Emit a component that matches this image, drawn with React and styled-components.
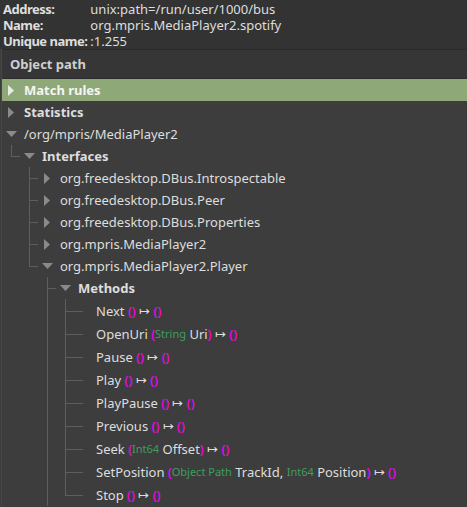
import React from "react";
import styled, { createGlobalStyle } from "styled-components";

const Colors = {
  Top: "#333333",
  Header: "#363636",
  Body: "#3d3d3d",
  Text: "#dedede",
  Dim: "#cfcfcf",
  Line: "#5e5e5e",
  Expander: "#8a8a8a",
  Selected: "#8fa878",
  Paren: "#ff00ff",
  Type: "#3f9d5e",
};

const GlobalStyle = createGlobalStyle`
  html, body {
    margin: 0;
    padding: 0;
    background: ${Colors.Body};
    overflow: hidden;
  }
  body {
    font-family: "Noto Sans", "Open Sans", sans-serif;
    font-size: 13px;
    color: ${Colors.Text};
  }
`;

const Page = styled.div`
  width: 467px;
  height: 507px;
  display: flex;
  flex-direction: column;
  background: ${Colors.Body};
  overflow: hidden;
`;

const InfoGrid = styled.div`
  display: grid;
  grid-template-columns: auto 1fr;
  grid-auto-rows: 16px;
  column-gap: 3px;
  padding: 1px 0 0 3px;
  background: ${Colors.Top};
  line-height: 16px;
`;

const InfoLabel = styled.div`
  font-weight: 700;
  letter-spacing: -0.5px;
  color: ${Colors.Text};
  white-space: nowrap;
`;

const InfoValue = styled.div`
  color: ${Colors.Text};
  white-space: nowrap;
`;

const TreeFrame = styled.div`
  flex: 1;
  display: flex;
  flex-direction: column;
  border-left: 1px solid #474747;
  margin-left: 1px;
  min-height: 0;
`;

const ColumnHeader = styled.div`
  height: 28px;
  display: flex;
  align-items: center;
  padding-left: 8px;
  background: ${Colors.Header};
  border-top: 1px solid #2a2a2a;
  border-bottom: 1px solid #2c2c2c;
  font-weight: 700;
  color: ${Colors.Dim};
`;

const Row = styled.div`
  display: flex;
  align-items: stretch;
  height: ${p => p.$height}px;
  background: ${p => (p.$selected ? Colors.Selected : "transparent")};
  white-space: nowrap;
`;

const Guide = styled.div`
  position: relative;
  flex: 0 0 18px;
  width: 18px;

  &::before {
    content: "";
    display: ${p => (p.$vertical ? "block" : "none")};
    position: absolute;
    left: 9px;
    top: 0;
    width: 1px;
    height: ${p => (p.$half ? "50%" : "100%")};
    background: ${Colors.Line};
  }

  &::after {
    content: "";
    display: ${p => (p.$branch ? "block" : "none")};
    position: absolute;
    left: 9px;
    top: 50%;
    width: ${p => p.$branch}px;
    height: 1px;
    background: ${Colors.Line};
  }
`;

const ExpanderCell = styled.div`
  flex: 0 0 18px;
  width: 18px;
  display: flex;
  align-items: center;
  justify-content: center;
`;

const Label = styled.div`
  display: flex;
  align-items: center;
  padding-left: 4px;
  white-space: pre;
  font-weight: ${p => (p.$bold ? 700 : 400)};
  color: ${p => (p.$selected ? "#f4f4f4" : Colors.Text)};
`;

const Paren = styled.span`
  color: ${Colors.Paren};
`;

const TypeName = styled.span`
  color: ${Colors.Type};
  font-size: 11px;
`;

const Arrow = styled.span`
  color: ${Colors.Text};
`;

const Expander = ({ open, light }) => {
  const fill = light ? "#e6ecdf" : Colors.Expander;
  return open ? (
    <svg width="11" height="6" viewBox="0 0 11 6">
      <path d="M0 0 L11 0 L5.5 6 Z" fill={fill} />
    </svg>
  ) : (
    <svg width="6" height="11" viewBox="0 0 6 11">
      <path d="M0 0 L6 5.5 L0 11 Z" fill={fill} />
    </svg>
  );
};

const methods = [
  { name: "Next", args: [] },
  { name: "OpenUri", args: [["String", "Uri"]] },
  { name: "Pause", args: [] },
  { name: "Play", args: [] },
  { name: "PlayPause", args: [] },
  { name: "Previous", args: [] },
  { name: "Seek", args: [["Int64", "Offset"]] },
  {
    name: "SetPosition",
    args: [
      ["Object Path", "TrackId"],
      ["Int64", "Position"],
    ],
  },
  { name: "Stop", args: [] },
];

const MethodLabel = ({ method }) => (
  <>
    {method.name + " "}
    <Paren>(</Paren>
    {method.args.map(([type, name], i) => (
      <React.Fragment key={name}>
        {i > 0 && ", "}
        <TypeName>{type}</TypeName>
        {" " + name}
      </React.Fragment>
    ))}
    <Paren>)</Paren>
    <Arrow>{" ↦ "}</Arrow>
    <Paren>()</Paren>
  </>
);

// Methods has more siblings below (Properties, Signals) that are scrolled out of view
const tree = [
  { label: "Match rules", bold: true, selected: true, expander: "closed" },
  { label: "Statistics", bold: true, expander: "closed" },
  {
    label: "/org/mpris/MediaPlayer2",
    expander: "open",
    children: [
      {
        label: "Interfaces",
        bold: true,
        expander: "open",
        children: [
          { label: "org.freedesktop.DBus.Introspectable", expander: "closed" },
          { label: "org.freedesktop.DBus.Peer", expander: "closed" },
          { label: "org.freedesktop.DBus.Properties", expander: "closed" },
          { label: "org.mpris.MediaPlayer2", expander: "closed" },
          {
            label: "org.mpris.MediaPlayer2.Player",
            expander: "open",
            children: [
              {
                label: "Methods",
                bold: true,
                expander: "open",
                hasMoreSiblings: true,
                children: methods.map(m => ({ method: m, height: 23 })),
              },
            ],
          },
        ],
      },
    ],
  },
];

const flatten = (nodes, level = 0, guides = [], out = []) => {
  nodes.forEach((node, i) => {
    const last = i === nodes.length - 1 && !node.hasMoreSiblings;
    out.push({ ...node, level, guides, last });
    if (node.children) flatten(node.children, level + 1, level > 0 ? [...guides, !last] : guides, out);
  });
  return out;
};

const rows = flatten(tree);

const TreeRow = ({ row }) => {
  const leaf = !row.expander;
  return (
    <Row $height={row.height || 22} $selected={row.selected}>
      {row.guides.map((on, i) => (
        <Guide key={i} $vertical={on} />
      ))}
      {row.level > 0 && <Guide $vertical $half={row.last} $branch={leaf ? 18 : 9} />}
      <ExpanderCell>
        {row.expander && <Expander open={row.expander === "open"} light={row.selected} />}
      </ExpanderCell>
      <Label $bold={row.bold} $selected={row.selected}>
        {row.method ? <MethodLabel method={row.method} /> : row.label}
      </Label>
    </Row>
  );
};

export default function App() {
  return (
    <Page>
      <GlobalStyle />
      <InfoGrid>
        <InfoLabel>Address:</InfoLabel>
        <InfoValue>unix:path=/run/user/1000/bus</InfoValue>
        <InfoLabel>Name:</InfoLabel>
        <InfoValue>org.mpris.MediaPlayer2.spotify</InfoValue>
        <InfoLabel>Unique name:</InfoLabel>
        <InfoValue>:1.255</InfoValue>
      </InfoGrid>
      <TreeFrame>
        <ColumnHeader>Object path</ColumnHeader>
        {rows.map((row, i) => (
          <TreeRow key={i} row={row} />
        ))}
      </TreeFrame>
    </Page>
  );
}
